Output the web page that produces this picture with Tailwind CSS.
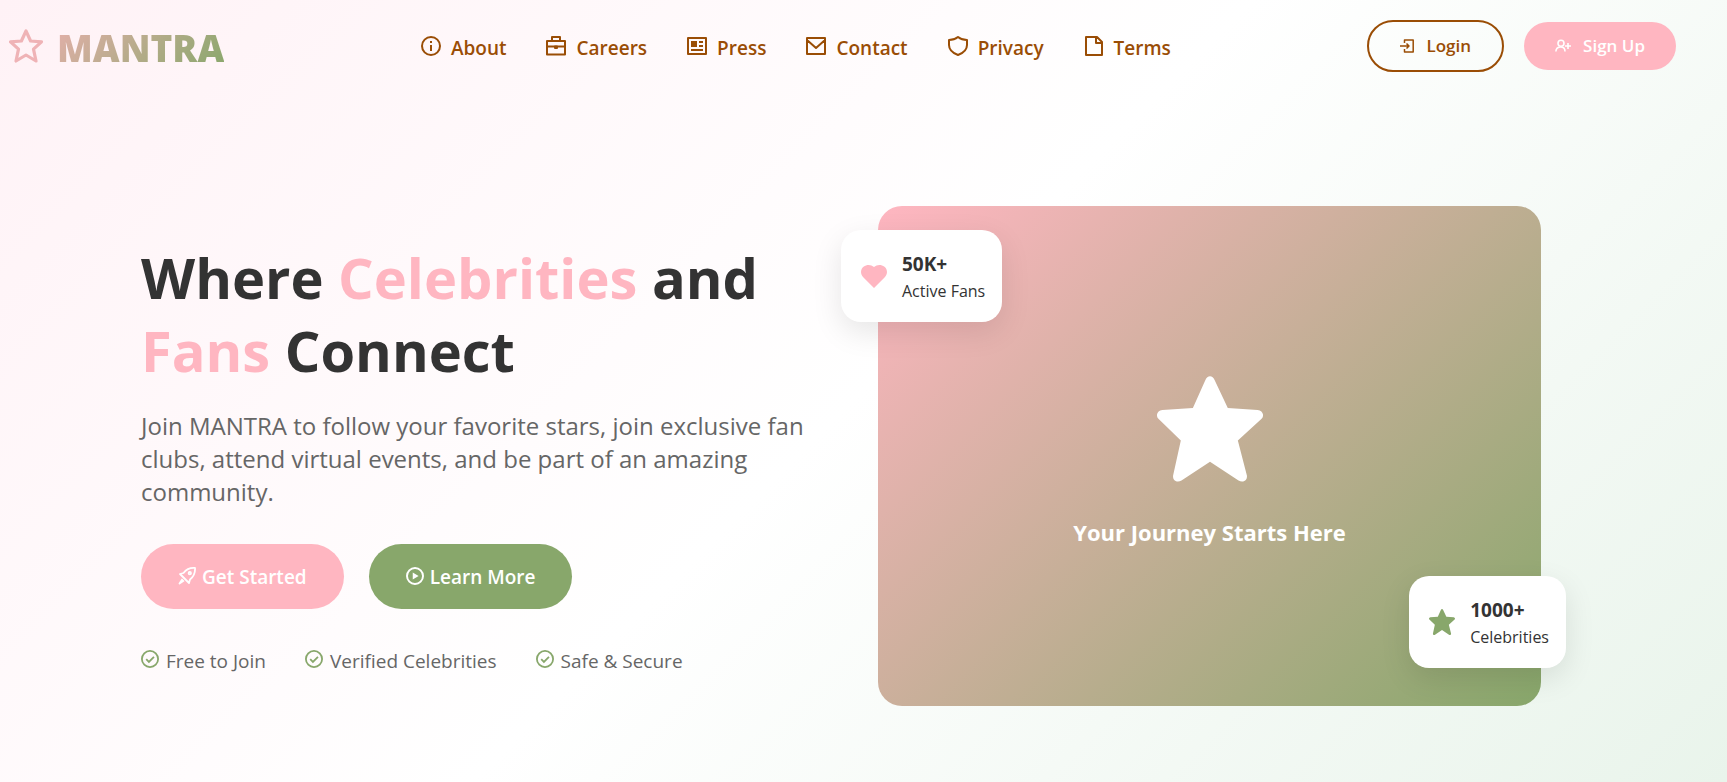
<!DOCTYPE html>
<html lang="en">
<head>
<meta charset="utf-8">
<meta name="viewport" content="width=device-width, initial-scale=1">
<title>MANTRA</title>
<script src="https://cdn.jsdelivr.net/npm/@tailwindcss/browser@4"></script>
</head>
<body class="min-h-screen bg-[linear-gradient(135deg,#fff2f6_0%,#ffffff_50%,#e9f4eb_100%)] font-['Open_Sans','Noto_Sans',sans-serif] text-[#333333]">
<svg class="hidden" aria-hidden="true">
  <symbol id="star" viewBox="0 0 316 315"><path d="M144 12C150-4 166-4 172 12L211 95L300 101C316 103 321 118 311 128L241 192L268 296C270 311 256 319 243 311L158 255L73 311C60 319 46 311 48 296L71 192L5 128C-5 118 0 103 16 101L107 95Z" fill="currentColor"/></symbol>
  <symbol id="check" viewBox="2 2 20 20"><circle cx="12" cy="12" r="9" fill="none" stroke="currentColor" stroke-width="2"/><path d="M7.8 12.2l3 3 5.6-5.6" fill="none" stroke="currentColor" stroke-width="2"/></symbol>
</svg>

<header class="flex items-center justify-between pt-5 pr-[51px] pl-[9px]">
  <a href="#" class="flex items-center gap-[14px]" aria-label="MANTRA">
    <svg class="size-[34px]" viewBox="0 0 34 34" fill="none" stroke="#efb3b6" stroke-width="3.200" stroke-linejoin="round"><path d="M17 2L21.600 12L32.500 12.800L24.500 20.200L27 32L17 26L7 32L9.500 20.200L1.500 12.800L12.400 12Z"/></svg>
    <span class="bg-[linear-gradient(135deg,#e5b0ab,#88a76b)] bg-clip-text pt-1 text-[37px] leading-[48px] font-extrabold text-transparent">MANTRA</span>
  </a>

  <nav class="flex items-center gap-10 pt-1 text-[19px] leading-7 font-semibold text-[#9a4d05]" aria-label="Main">
    <a href="#" class="flex items-center gap-[10px]"><svg class="mb-1 size-5" viewBox="2 2 20 20" fill="none" stroke="currentColor" stroke-width="2"><circle cx="12" cy="12" r="9"/><path d="M12 11v6M12 7v2"/></svg>About</a>
    <a href="#" class="flex items-center gap-[10px]"><svg class="mb-1 size-5" viewBox="2 2 20 20" fill="none" stroke="currentColor" stroke-width="2" stroke-linejoin="round"><path d="M3 7h18v13.500H3ZM8 7V3h8v4M3 12.500h18"/><path d="M11 12.500h2v1.500h-2z"/></svg>Careers</a>
    <a href="#" class="flex items-center gap-[10px]"><svg class="mb-1 size-5" viewBox="2 2 20 20" fill="none" stroke="currentColor" stroke-width="2" stroke-linejoin="round"><path d="M3 4h18v16H3ZM14 8h4M14 12h4M6 16h12"/><path d="M6 7h6v6H6z" fill="currentColor" stroke="none"/></svg>Press</a>
    <a href="#" class="flex items-center gap-[10px]"><svg class="mb-1 size-5" viewBox="2 2 20 20" fill="none" stroke="currentColor" stroke-width="2" stroke-linejoin="round"><path d="M3 4h18v16H3ZM3 6l9 8 9-8"/></svg>Contact</a>
    <a href="#" class="flex items-center gap-[10px]"><svg class="mb-1 size-5" viewBox="2 2 20 20" fill="none" stroke="currentColor" stroke-width="2" stroke-linejoin="round"><path d="M12 3C9.500 5 6.500 6 3 6V11C3 16 6.500 19 12 21C17.500 19 21 16 21 11V6C17.500 6 14.500 5 12 3Z"/></svg>Privacy</a>
    <a href="#" class="flex items-center gap-[10px]"><svg class="mb-1 size-5" viewBox="2 2 20 20" fill="none" stroke="currentColor" stroke-width="2" stroke-linejoin="round"><path d="M4 3h11l5 5v13H4ZM14 3v6h6"/></svg>Terms</a>
  </nav>

  <div class="flex items-center gap-5 text-[17px] leading-6 font-semibold">
    <button type="button" class="flex items-center gap-3 rounded-full border-2 border-[#9a4d05] px-[31px] py-3 text-[#9a4d05]"><svg class="size-[14px]" viewBox="0 0 14 14" fill="none" stroke="currentColor" stroke-width="1.500" stroke-linejoin="round"><path d="M4.500 4V1h8.700v12H4.500v-3M0 7h9M6.500 4.500L9 7L6.500 9.500"/></svg>Login</button>
    <button type="button" class="flex items-center gap-3 rounded-full bg-[#ffb6c1] px-[31px] py-3 text-white"><svg class="h-[14px] w-4" viewBox="0 0 16 14" fill="none" stroke="currentColor" stroke-width="1.600"><circle cx="6" cy="4.200" r="3"/><path d="M.9 12.500C1 9.500 3.200 8 5.800 8S10 9.500 10 12.500M13 4v6M10 7h6"/></svg>Sign Up</button>
  </div>
</header>

<main class="grid grid-cols-2 items-center gap-[74px] pt-[134px] pr-[186px] pb-[76px] pl-[141px]">
  <section class="pt-1">
    <h1 class="text-[56px] leading-[73px] font-bold">Where <span class="text-[#ffb6c1]">Celebrities</span> and <span class="text-[#ffb6c1]">Fans</span> Connect</h1>
    <p class="mt-[22px] text-[24px] leading-[33px] text-[#666666]">Join MANTRA to follow your favorite stars, join exclusive fan clubs, attend virtual events, and be part of an amazing community.</p>
    <div class="mt-9 flex gap-[25px] text-[19px] leading-[25px] font-semibold text-white">
      <button type="button" class="flex items-center gap-1.5 rounded-full bg-[#ffb6c1] px-[37px] pt-[21px] pb-[19px]"><svg class="mb-1 size-[18px]" viewBox="0 0 18 18" fill="none" stroke="currentColor" stroke-width="1.800" stroke-linejoin="round"><path d="M17 1C12 .6 8.500 2 5.500 6L2 7L11 16L12 12.500C16 9.500 17.400 6 17 1Z"/><circle cx="11.800" cy="6.200" r="1.200"/><path d="M4.500 12L1.500 16.500L6 13.500"/></svg>Get Started</button>
      <button type="button" class="flex items-center gap-1.5 rounded-full bg-[#88a76b] px-[37px] pt-[21px] pb-[19px]"><svg class="mb-1 size-[18px]" viewBox="2 2 20 20" fill="none" stroke="currentColor" stroke-width="2.200"><circle cx="12" cy="12" r="8.900"/><path d="M9.500 8l6.500 4-6.500 4z" fill="currentColor" stroke="none"/></svg>Learn More</button>
    </div>
    <ul class="mt-[38px] flex gap-[39px] text-[19px] leading-7 text-[#666666]">
      <li class="flex items-center gap-[7px]"><svg class="mb-1 size-[18px] text-[#88a76b]"><use href="#check"/></svg>Free to Join</li>
      <li class="flex items-center gap-[7px]"><svg class="mb-1 size-[18px] text-[#88a76b]"><use href="#check"/></svg>Verified Celebrities</li>
      <li class="flex items-center gap-[7px]"><svg class="mb-1 size-[18px] text-[#88a76b]"><use href="#check"/></svg>Safe &amp; Secure</li>
    </ul>
  </section>

  <section class="relative flex min-h-[500px] flex-col items-center justify-center rounded-3xl bg-[linear-gradient(135deg,#ffb6c1_0%,#88a76b_100%)] pt-3 text-white">
    <svg class="size-[106px]"><use href="#star"/></svg>
    <h2 class="mt-[34px] text-[22px] leading-8 font-bold">Your Journey Starts Here</h2>
    <div class="absolute top-6 -left-[37px] flex items-center gap-[15px] rounded-[20px] bg-white py-[19px] pr-[17px] pl-5 text-[#333333] shadow-[0_10px_30px_rgba(0,0,0,0.1)]">
      <svg class="h-[23px] w-[26px] text-[#ffb6c1]" viewBox="0 0 26 23"><path d="M13 23L2 12C-1 8.500-.4 4 2.500 1.800C6-.8 10-.4 13 2C16-.4 20-.8 23.500 1.800C26.400 4 27 8.500 24 12Z" fill="currentColor"/></svg>
      <div><strong class="block text-[19px] leading-[30px] font-bold">50K+</strong><span class="block text-[16px] leading-6">Active Fans</span></div>
    </div>
    <div class="absolute -right-[25px] bottom-[38px] flex items-center gap-[15px] rounded-[20px] bg-white py-[19px] pr-[17px] pl-5 text-[#333333] shadow-[0_10px_30px_rgba(0,0,0,0.1)]">
      <svg class="size-[26px] text-[#88a76b]"><use href="#star"/></svg>
      <div><strong class="block text-[19px] leading-[30px] font-bold">1000+</strong><span class="block text-[16px] leading-6">Celebrities</span></div>
    </div>
  </section>
</main>
</body>
</html>
